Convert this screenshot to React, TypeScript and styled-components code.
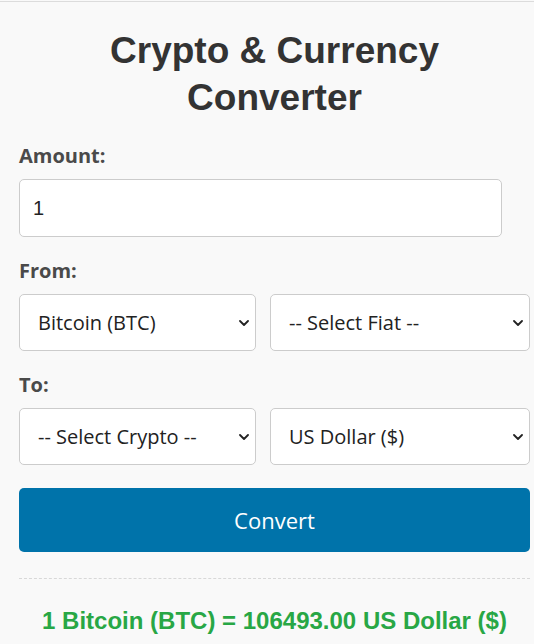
import React, { useState } from 'react';
import styled, { createGlobalStyle } from 'styled-components';

const GlobalStyle = createGlobalStyle`
  html, body {
    margin: 0;
    padding: 0;
    background: #f9f9f9;
  }
  body {
    border-top: 1px solid #dcdcdc;
    margin-top: 1px;
  }
`;

const Wrapper = styled.div`
  width: 511px;
  padding: 0 4px 0 19px;
  font-family: "Open Sans", "Liberation Sans", Arial, sans-serif;
`;

const Title = styled.h1`
  margin: 25px 0 21px;
  font-family: "Liberation Sans", Arial, sans-serif;
  font-size: 37px;
  line-height: 47px;
  font-weight: 700;
  color: #333;
  text-align: center;
`;

const Group = styled.div`
  margin-bottom: 20px;
`;

const Label = styled.label`
  display: block;
  margin-bottom: 9px;
  font-size: 20px;
  line-height: 28px;
  font-weight: 700;
  color: #4a4a4a;
`;

const AmountInput = styled.input`
  box-sizing: border-box;
  display: block;
  width: 483px;
  height: 58px;
  padding: 0 13px;
  border: 1px solid #cccccc;
  border-radius: 5px;
  background: #fff;
  font-family: "Liberation Sans", Arial, sans-serif;
  font-size: 20px;
  color: #222;
  outline: none;
`;

const SelectRow = styled.div`
  display: grid;
  grid-template-columns: 237px 1fr;
  gap: 14px;
`;

const chevron =
  "url(\"data:image/svg+xml,%3Csvg xmlns='http://www.w3.org/2000/svg' width='10' height='6' viewBox='0 0 10 6'%3E%3Cpath d='M1 1l4 4 4-4' fill='none' stroke='%23222' stroke-width='1.8' stroke-linecap='round' stroke-linejoin='round'/%3E%3C/svg%3E\")";

const Select = styled.select`
  box-sizing: border-box;
  width: 100%;
  height: 57px;
  padding: 0 24px 0 18px;
  border: 1px solid #cccccc;
  border-radius: 5px;
  background: #fff ${chevron} no-repeat right 6px center;
  appearance: none;
  -webkit-appearance: none;
  font-family: "Open Sans", sans-serif;
  font-size: 20px;
  color: #222;
  outline: none;
`;

const ConvertButton = styled.button`
  display: block;
  width: 100%;
  height: 64px;
  margin-top: 23px;
  border: none;
  border-radius: 5px;
  background: #0073aa;
  color: #fff;
  font-family: "Open Sans", sans-serif;
  font-size: 22px;
  cursor: pointer;
`;

const Result = styled.div`
  margin-top: 26px;
  padding-top: 28px;
  border-top: 1px dashed #d8d8d8;
  font-family: "Liberation Sans", Arial, sans-serif;
  font-size: 24px;
  line-height: 28px;
  font-weight: 700;
  color: #28a745;
  text-align: center;
`;

const cryptos = [
  { value: '', label: '-- Select Crypto --' },
  { value: 'BTC', label: 'Bitcoin (BTC)' },
  { value: 'ETH', label: 'Ethereum (ETH)' },
];

const fiats = [
  { value: '', label: '-- Select Fiat --' },
  { value: 'USD', label: 'US Dollar ($)' },
  { value: 'EUR', label: 'Euro (€)' },
];

const App = () => {
  const [amount, setAmount] = useState('1');
  const [fromCrypto, setFromCrypto] = useState('BTC');
  const [fromFiat, setFromFiat] = useState('');
  const [toCrypto, setToCrypto] = useState('');
  const [toFiat, setToFiat] = useState('USD');

  return (
    <>
      <GlobalStyle />
      <Wrapper>
        <Title>Crypto &amp; Currency Converter</Title>

        <Group>
          <Label htmlFor="amount">Amount:</Label>
          <AmountInput id="amount" value={amount} onChange={(e) => setAmount(e.target.value)} />
        </Group>

        <Group>
          <Label>From:</Label>
          <SelectRow>
            <Select value={fromCrypto} onChange={(e) => setFromCrypto(e.target.value)}>
              {cryptos.map((c) => (
                <option key={c.value} value={c.value}>{c.label}</option>
              ))}
            </Select>
            <Select value={fromFiat} onChange={(e) => setFromFiat(e.target.value)}>
              {fiats.map((f) => (
                <option key={f.value} value={f.value}>{f.label}</option>
              ))}
            </Select>
          </SelectRow>
        </Group>

        <Group>
          <Label>To:</Label>
          <SelectRow>
            <Select value={toCrypto} onChange={(e) => setToCrypto(e.target.value)}>
              {cryptos.map((c) => (
                <option key={c.value} value={c.value}>{c.label}</option>
              ))}
            </Select>
            <Select value={toFiat} onChange={(e) => setToFiat(e.target.value)}>
              {fiats.map((f) => (
                <option key={f.value} value={f.value}>{f.label}</option>
              ))}
            </Select>
          </SelectRow>
        </Group>

        <ConvertButton>Convert</ConvertButton>

        <Result>1 Bitcoin (BTC) = 106493.00 US Dollar ($)</Result>
      </Wrapper>
    </>
  );
};

export default App;
